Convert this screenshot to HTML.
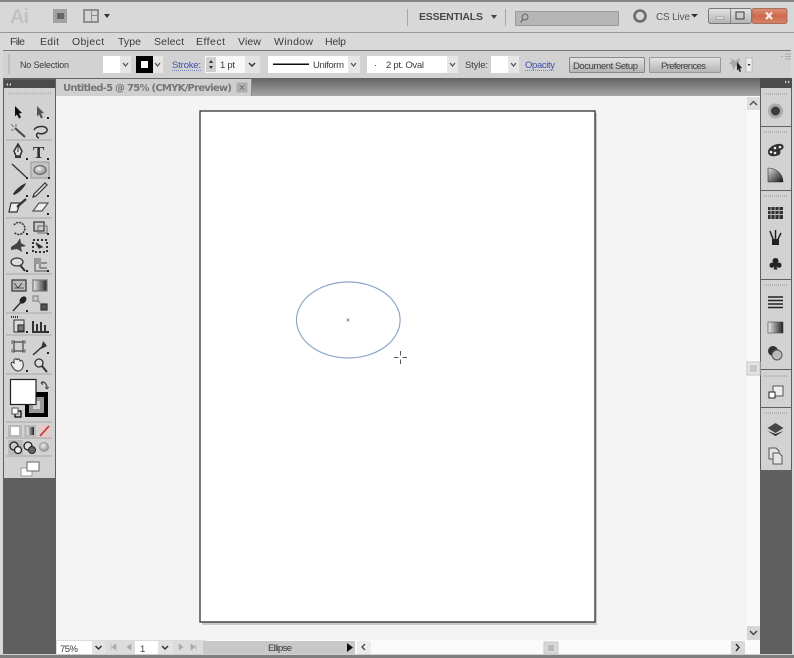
<!DOCTYPE html>
<html><head><meta charset="utf-8"><style>
html,body{margin:0;padding:0;width:794px;height:658px;overflow:hidden;background:#d6d6d6}
svg{display:block}
text{font-family:"Liberation Sans",sans-serif;fill:#3a3a3a}
</style></head><body>
<svg width="794" height="658" viewBox="0 0 794 658" xmlns="http://www.w3.org/2000/svg">
<defs>
<filter id="all" filterUnits="userSpaceOnUse" x="-8" y="-8" width="810" height="674"><feGaussianBlur stdDeviation="0.38"/></filter>
<filter id="b" x="-5%" y="-5%" width="110%" height="110%"><feGaussianBlur stdDeviation="0.35"/></filter>
<linearGradient id="tab" x1="0" y1="0" x2="0" y2="1"><stop offset="0" stop-color="#626262"/><stop offset="1" stop-color="#a6a6a6"/></linearGradient>
<linearGradient id="cl" x1="0" y1="0" x2="0" y2="1"><stop offset="0" stop-color="#dc9078"/><stop offset=".5" stop-color="#cf6a4a"/><stop offset="1" stop-color="#d48468"/></linearGradient>
<linearGradient id="gb" x1="0" y1="0" x2="0" y2="1"><stop offset="0" stop-color="#e4e4e4"/><stop offset="1" stop-color="#b4b4b4"/></linearGradient>
<linearGradient id="grad" x1="0" y1="0" x2="1" y2="0"><stop offset="0" stop-color="#eee"/><stop offset="1" stop-color="#222"/></linearGradient>
<linearGradient id="tri" x1="0" y1="0" x2="1" y2="1"><stop offset="0" stop-color="#ddd"/><stop offset="1" stop-color="#111"/></linearGradient>
<radialGradient id="ball" cx=".4" cy=".35" r=".7"><stop offset="0" stop-color="#eee"/><stop offset="1" stop-color="#888"/></radialGradient>
</defs>
<g filter="url(#all)">

<!-- base -->
<rect x="-8" y="-8" width="810" height="674" fill="#d8d8d8"/>
<rect x="-8" y="-8" width="810" height="10" fill="#858585"/>
<rect y="32" width="794" height="1" fill="#9a9a9a"/>
<rect y="33" width="794" height="17" fill="#d9d9d9"/>
<rect x="3" y="50" width="788" height="1" fill="#777"/>
<rect x="3" y="51" width="788" height="27" fill="#d2d2d2"/>

<!-- dark side areas -->
<rect x="3" y="78" width="53" height="577" fill="#5e5e5e"/>
<rect x="760" y="78" width="32" height="577" fill="#5e5e5e"/>

<!-- tab bar -->
<rect x="56" y="78" width="704" height="18" fill="url(#tab)"/>
<rect x="56" y="79" width="195" height="17" fill="#cfcfcf"/>
<rect x="251" y="79" width="1" height="17" fill="#8a8a8a"/>

<!-- canvas -->
<rect x="56" y="96" width="704" height="559" fill="#f4f4f4"/>
<rect x="747" y="96" width="13" height="544" fill="#f9f9f9"/>
<rect x="203" y="640" width="557" height="14" fill="#fafafa"/>
<rect x="56" y="640" width="150" height="14" fill="#dcdcdc"/>

<!-- artboard -->
<rect x="202" y="113" width="395" height="512" fill="#c9c9c9" filter="url(#b)"/>
<rect x="200" y="111" width="395" height="511" fill="#fff" stroke="#222" stroke-width="1.200"/>

<!-- ellipse -->
<ellipse cx="348.300" cy="320" rx="51.800" ry="38" fill="#fff" stroke="#8ea6c8" stroke-width="1.200"/>
<path d="M346.500 318.500l3 3M349.500 318.500l-3 3" stroke="#777" stroke-width=".7"/>
<path d="M400.500 351v4.500M400.500 359.500v4.500M394 357.500h4.500M402.500 357.500h4.500" stroke="#555" stroke-width="1"/>

<!-- bottom frame -->
<rect y="654" width="794" height="1" fill="#cfcfcf"/>
<rect x="-8" y="655" width="810" height="11" fill="#7f7f7f"/>

<!-- title bar -->
<g>
<text x="10" y="23" font-size="20" font-weight="bold" style="fill:#c2c2c2" textLength="19">Ai</text>
<rect x="53" y="9" width="14" height="14" fill="#a2a2a2"/><rect x="57" y="13" width="7" height="6" fill="#666"/>
<rect x="83" y="9" width="16" height="14" fill="#8e8e8e"/>
<rect x="85" y="11" width="6" height="10" fill="#d6d6d6"/><rect x="92" y="11" width="5" height="4" fill="#d6d6d6"/><rect x="92" y="16" width="5" height="5" fill="#d6d6d6"/>
<path d="M104 14h6l-3 4z" fill="#333"/>
<rect x="407" y="9" width="1" height="17" fill="#a8a8a8"/>
<text x="419" y="20" font-size="10.500" font-weight="bold" style="fill:#4a4a4a" textLength="64">ESSENTIALS</text>
<path d="M491 15h6l-3 4z" fill="#444"/>
<rect x="505" y="9" width="1" height="17" fill="#a8a8a8"/>
<rect x="515.500" y="11.500" width="103" height="14" rx="1" fill="#b6b6b6" stroke="#999"/>
<circle cx="525" cy="17" r="3" fill="none" stroke="#666" stroke-width="1"/><path d="M523 19.500l-2.500 3" stroke="#666" stroke-width="1.200"/>
<circle cx="640" cy="16" r="5.500" fill="none" stroke="#6b6b6b" stroke-width="2.600"/>
<text x="656" y="20" font-size="10" style="fill:#555" textLength="34">CS Live</text>
<path d="M691 14h7l-3.500 3.500z" fill="#333"/>
<rect x="708.500" y="8.500" width="43" height="15" rx="2" fill="url(#gb)" stroke="#777"/>
<rect x="752" y="8.500" width="35" height="15" rx="2" fill="url(#cl)" stroke="#a8705c"/>
<rect x="730" y="9" width="1" height="14" fill="#888"/>
<rect x="716" y="17" width="8" height="2" fill="#fff" stroke="#666" stroke-width=".5"/>
<rect x="736" y="12" width="8" height="7" fill="none" stroke="#555" stroke-width="1.200"/><rect x="738" y="14" width="4" height="3" fill="#ccc"/>
<path d="M766 12.500l6 6.500M772 12.500l-6 6.500" stroke="#f3ece8" stroke-width="2.200"/>
</g>

<!-- menu -->
<g font-size="10.500">
<text x="10" y="45" textLength="15">File</text>
<text x="40" y="45" textLength="19">Edit</text>
<text x="72" y="45" textLength="32">Object</text>
<text x="118" y="45" textLength="23">Type</text>
<text x="154" y="45" textLength="30">Select</text>
<text x="196" y="45" textLength="29">Effect</text>
<text x="238" y="45" textLength="23">View</text>
<text x="274" y="45" textLength="39">Window</text>
<text x="325" y="45" textLength="21">Help</text>
</g>

<!-- control bar -->
<g>
<rect x="8" y="54" width="2" height="20" fill="#bdbdbd"/>
<text x="20" y="68" font-size="9" textLength="49">No Selection</text>
<rect x="103" y="56" width="17" height="17" fill="#fff"/>
<rect x="120" y="56" width="11" height="17" fill="#e6e6e6"/><path d="M123 63l2.500 3 2.500-3" fill="none" stroke="#555" stroke-width="1.300"/>
<rect x="136" y="56" width="17" height="17" fill="#000"/><rect x="141" y="61" width="7" height="7" fill="#fff"/>
<rect x="153" y="56" width="10" height="17" fill="#e6e6e6"/><path d="M155 63l2.500 3 2.500-3" fill="none" stroke="#555" stroke-width="1.300"/>
<text x="172" y="68" font-size="9.500" style="fill:#3f4fb0" textLength="29">Stroke:</text>
<path d="M172 70.500h29" stroke="#5a66b8" stroke-width=".7" stroke-dasharray="1 1"/>
<rect x="205" y="56" width="40" height="17" fill="#f7f7f7"/>
<rect x="206" y="57" width="10" height="15" fill="#cfcfcf"/>
<path d="M209 63l2-3 2 3zM209 66l2 3 2-3z" fill="#333"/>
<text x="220" y="68" font-size="9.500" textLength="15">1 pt</text>
<rect x="245" y="56" width="15" height="17" fill="#e2e2e2"/><path d="M249 63l3 3 3-3" fill="none" stroke="#333" stroke-width="1.500"/>
<rect x="268" y="56" width="80" height="17" fill="#fff"/>
<rect x="273" y="63.500" width="36" height="1.500" fill="#111"/>
<text x="313" y="68" font-size="9.500" textLength="31">Uniform</text>
<rect x="348" y="56" width="12" height="17" fill="#e6e6e6"/><path d="M351 63l2.500 3 2.500-3" fill="none" stroke="#555" stroke-width="1.300"/>
<rect x="367" y="56" width="80" height="17" fill="#fff"/>
<text x="374" y="68" font-size="9.500">·</text>
<text x="386" y="68" font-size="9.500" textLength="38">2 pt. Oval</text>
<rect x="447" y="56" width="11" height="17" fill="#e6e6e6"/><path d="M450 63l2.500 3 2.500-3" fill="none" stroke="#555" stroke-width="1.300"/>
<text x="465" y="68" font-size="9.500" textLength="23">Style:</text>
<rect x="491" y="56" width="17" height="17" fill="#fff"/>
<rect x="508" y="56" width="11" height="17" fill="#e6e6e6"/><path d="M511 63l2.500 3 2.500-3" fill="none" stroke="#555" stroke-width="1.300"/>
<text x="525" y="68" font-size="9.500" style="fill:#3f4fb0" textLength="30">Opacity</text>
<path d="M525 70.500h30" stroke="#5a66b8" stroke-width=".7" stroke-dasharray="1 1"/>
<rect x="569.500" y="57.500" width="75" height="15" rx="1" fill="url(#gb)" stroke="#888"/>
<text x="573" y="69" font-size="9.500" textLength="65">Document Setup</text>
<rect x="649.500" y="57.500" width="71" height="15" rx="1" fill="url(#gb)" stroke="#999"/>
<text x="661" y="69" font-size="9.500" textLength="45">Preferences</text>
<path d="M730 58l5 3 5-3-1 6 2 3-5-1-3 4-1-5-3-2 3-2z" fill="#aaa"/>
<path d="M737 62l5 6-2 .5 1 3-1.500.5-1-3-1.500 1.500z" fill="#222"/>
<rect x="746" y="58" width="6" height="14" fill="#eee" stroke="#999" stroke-width=".5"/><path d="M747.500 64h3l-1.500 2z" fill="#222"/>
<path d="M781 56.500h2M785 54h6M785 56.500h6M785 59h6" stroke="#aaa" stroke-width="1"/>
</g>

<!-- tab text -->
<g>
<text x="63" y="91" font-size="10" font-weight="bold" style="font-family:'DejaVu Sans',sans-serif;fill:#757575" textLength="169">Untitled-5 @ 75% (CMYK/Preview)</text>
<rect x="237" y="83" width="10" height="9" fill="#b4b4b4" stroke="#9a9a9a" stroke-width=".6"/>
<path d="M239.500 85l5 5M244.500 85l-5 5" stroke="#777" stroke-width="1"/>
</g>

<!-- scrollbars -->
<g>
<rect x="747" y="97" width="13" height="13" fill="#dedede"/><path d="M750 105l3.500-3.500 3.500 3.500" fill="none" stroke="#555" stroke-width="1.500"/>
<rect x="747" y="362" width="13" height="13" fill="#e4e4e4" stroke="#c4c4c4"/><rect x="750" y="365" width="7" height="7" fill="#c8c8c8"/>
<rect x="747" y="626" width="13" height="14" fill="#d6d6d6"/><path d="M750 631l3.500 3.500 3.500-3.500" fill="none" stroke="#444" stroke-width="1.500"/>
<rect x="57" y="641" width="35" height="13" fill="#fff"/>
<text x="60" y="652" font-size="9.500" textLength="18">75%</text>
<rect x="92" y="641" width="14" height="13" fill="#e2e2e2"/><path d="M95.500 646l3 3 3-3" fill="none" stroke="#333" stroke-width="1.500"/>
<path d="M111 644v6M116 644l-4 3 4 3zM131 644l-4 3 4 3z" fill="#aaa" stroke="#aaa" stroke-width=".6"/>
<rect x="135" y="641" width="23" height="13" fill="#fff"/>
<text x="140" y="652" font-size="9.500">1</text>
<rect x="158" y="641" width="15" height="13" fill="#e2e2e2"/><path d="M162 646l3 3 3-3" fill="none" stroke="#333" stroke-width="1.500"/>
<path d="M179 644l4 3-4 3zM191 644l4 3-4 3zM196 644v6" fill="#aaa" stroke="#aaa" stroke-width=".6"/>
<rect x="203" y="641" width="152" height="13" fill="#c8c8c8"/>
<text x="268" y="651" font-size="9.500" textLength="24">Ellipse</text>
<path d="M347 643l6 4.500-6 4.500z" fill="#111"/>
<rect x="357" y="641" width="14" height="13" fill="#ececec"/><path d="M365 644l-3 3 3 3" fill="none" stroke="#444" stroke-width="1.300"/>
<rect x="544" y="642" width="14" height="12" fill="#d8d8d8" stroke="#c8c8c8"/><rect x="548" y="645" width="6" height="6" fill="#bbb"/>
<rect x="731" y="641" width="14" height="13" fill="#d8d8d8"/><path d="M736 644l3 3.500-3 3.500" fill="none" stroke="#333" stroke-width="1.500"/>
</g>

<!-- left toolbox -->
<rect x="4" y="88" width="51" height="390" fill="#d2d2d2"/>
<rect x="4" y="80" width="51" height="8" fill="#4c4c4c"/>
<path d="M8 83l-2 1.500 2 1.500zM11 83l-2 1.500 2 1.500z" fill="#ccc"/>
<path d="M8 93.500h44" stroke="#b4b4b4" stroke-dasharray="1 1" stroke-width="2"/>
<path d="M6 140h46M6 218h46M6 274h46M6 313h46M6 335h46M6 374h46M6 422h46M6 438h46M6 456h46" stroke="#a8a8a8" stroke-width="1"/>
<g fill="none" stroke="#333" stroke-width="1.200">
<rect x="31" y="162" width="18" height="16" fill="#c4c4c4" stroke="#a0a0a0"/>
<path d="M15 106l7 7-3 .5 2 4-2 1-2-4-2 2z" fill="#111" stroke="none"/>
<path d="M37 106l7 7-3 .5 2 4-2 1-2-4-2 2z" fill="#555" stroke="none"/>
<path d="M15 128l10 9" stroke="#444" stroke-width="2"/><path d="M11 124l3 3M16 124v3M11 130h3" stroke="#888"/>
<path d="M34 130c2-4 11-5 13-1 1 4-6 6-9 4-2 1-2 4 1 5" stroke-width="1.500"/>
<path d="M18 144l4 7-2 5h-4l-2-5z" fill="#ddd" stroke-width="1.500"/><path d="M18 144v8" stroke-width="1"/><path d="M15 157h6" stroke-width="2"/>
<text x="33" y="158" font-size="17" font-weight="bold" style="font-family:'Liberation Serif',serif;fill:#333" stroke="none">T</text>
<path d="M12 164l14 13" stroke-width="1.300"/>
<ellipse cx="40" cy="170" rx="6" ry="4.500" fill="url(#ball)" stroke="#666"/>
<path d="M13 194c2-4 8-9 13-11-1 4-7 10-12 12z" fill="#333" stroke="none"/>
<path d="M34 194l11-11 2 2-11 11-3 1z" fill="#ddd"/>
<path d="M11 203h9l-3 9h-8z" fill="#eee"/><path d="M17 207l9-8" stroke-width="2.200"/>
<path d="M33 211l6-8h9l-6 8z" fill="#eee" stroke="#555"/>
<path d="M14 225a6 6 0 1 1 0 7" stroke-dasharray="2 1" stroke-width="1.500"/>
<rect x="34" y="222" width="10" height="9" fill="#ccc"/><rect x="38" y="226" width="9" height="7" stroke="#777"/>
<path d="M11 247l6-4 3-5 1 5 5 3-5 1 1 5-5-3-6 1z" fill="#444" stroke="none"/>
<path d="M33 240h14v12h-14z" stroke-dasharray="2 2" stroke-width="2"/><path d="M36 243l6 4-3 1z" fill="#222"/>
<ellipse cx="17" cy="262" rx="6" ry="4" fill="#ddd"/><path d="M20 265l5 6" stroke-width="2"/>
<path d="M35 258v13h12M40 258v10h7M35 263h12" stroke="#666"/><rect x="35" y="258" width="6" height="6" fill="#999" stroke="none"/>
<rect x="12" y="280" width="14" height="11" fill="#bbb"/><path d="M14 283l4 5 4-5M14 288h10" stroke-width=".8"/>
<rect x="33" y="280" width="14" height="11" fill="url(#grad)" stroke="#777"/>
<path d="M13 311l9-10" stroke-width="1.500"/><ellipse cx="23" cy="300" rx="3" ry="4" fill="#222" stroke="none" transform="rotate(40 23 300)"/>
<rect x="33" y="296" width="5" height="5" fill="#ccc" stroke="#888"/><rect x="41" y="304" width="6" height="6" fill="#555" stroke="#333"/><path d="M38 301l3 3" stroke="#888"/>
<rect x="14" y="320" width="10" height="12" fill="#ddd" stroke-width="1"/><rect x="18" y="325" width="6" height="6" fill="#777"/><path d="M11 317h7" stroke-dasharray="1 1" stroke-width="2"/>
<path d="M33 331v-10M37 331v-7M41 331v-9M45 331v-6M32 332h16" stroke-width="2"/>
<rect x="14" y="342" width="9" height="9" stroke="#444"/><path d="M12 344v-3h3M25 344v-3h-3M12 349v3h3M25 349v3h-3" stroke="#444" stroke-width=".8"/>
<path d="M33 355l10-9" stroke-width="1.500"/><path d="M43 341l4 5-6 3z" fill="#333" stroke="none"/>
<path d="M12 366c-2-3 0-5 2-3v-3c1-2 3-1 3 0 1-2 3-1 3 1 2-1 3 0 3 2 1 5-2 8-5 8s-4-2-6-5z" fill="#eee" stroke-width="1"/>
<circle cx="39" cy="363" r="4" fill="#ddd" stroke-width="1.300"/><path d="M42 366l5 6" stroke-width="2"/>
</g>
<g fill="#222">
<rect x="47" y="117" width="2" height="2"/><rect x="26" y="158" width="2" height="2"/><rect x="47" y="158" width="2" height="2"/><rect x="26" y="177" width="2" height="2"/><rect x="48" y="177" width="2" height="2"/><rect x="26" y="195" width="2" height="2"/><rect x="47" y="195" width="2" height="2"/><rect x="47" y="213" width="2" height="2"/><rect x="26" y="233" width="2" height="2"/><rect x="47" y="233" width="2" height="2"/><rect x="26" y="252" width="2" height="2"/><rect x="26" y="270" width="2" height="2"/><rect x="47" y="270" width="2" height="2"/><rect x="26" y="310" width="2" height="2"/><rect x="26" y="331" width="2" height="2"/><rect x="47" y="331" width="2" height="2"/><rect x="47" y="352" width="2" height="2"/><rect x="26" y="370" width="2" height="2"/>
</g>

<!-- fill / stroke -->
<g>
<rect x="25" y="392" width="23" height="25" fill="#000"/>
<rect x="29" y="397" width="15" height="16" fill="#999"/>
<rect x="33" y="401" width="7" height="8" fill="#d2d2d2"/>
<rect x="10.500" y="379.500" width="25.500" height="25" fill="#fff" stroke="#222" stroke-width="1.200"/>
<path d="M41 383c3-2 5 0 6 4M41 383l2-1.500M41 383l2 1.500M47 389l-1.500-2M47 389l1.500-2" fill="none" stroke="#444" stroke-width="1.300"/>
<rect x="15" y="411" width="6" height="6" fill="none" stroke="#111" stroke-width="1.300"/>
<rect x="12" y="408" width="6" height="6" fill="#fff" stroke="#555"/>
<rect x="8" y="425" width="14" height="12" fill="#b8b8b8"/><rect x="11" y="427" width="8" height="8" fill="#fff"/>
<rect x="24" y="425" width="12" height="12" fill="#bbb"/><rect x="27" y="427" width="7" height="8" fill="url(#grad)"/>
<rect x="39" y="425" width="11" height="12" fill="#e8c8c8"/><path d="M40 436l9-10" stroke="#c03030" stroke-width="1.600"/>
<rect x="8" y="440" width="15" height="15" fill="#bbb"/>
<circle cx="14" cy="446" r="4" fill="#ccc" stroke="#222" stroke-width="1.300"/><circle cx="18" cy="450" r="3.500" fill="#eee" stroke="#222" stroke-width="1.300"/>
<circle cx="28" cy="446" r="4" fill="#ddd" stroke="#222" stroke-width="1.300"/><circle cx="32" cy="450" r="3.500" fill="#666" stroke="#222"/>
<circle cx="44" cy="447" r="4.500" fill="url(#ball)" stroke="#999"/>
<rect x="21" y="468" width="11" height="8" fill="#fff" stroke="#999"/>
<rect x="27" y="462" width="12" height="9" fill="#fff" stroke="#666"/>
</g>

<!-- right dock -->
<rect x="760" y="78" width="32" height="10" fill="#4c4c4c"/>
<path d="M785 80.500l2 1.500-2 1.500zM788 80.500l2 1.500-2 1.500z" fill="#ccc"/>
<rect x="761" y="88" width="30" height="38" fill="#d2d2d2"/>
<rect x="761" y="127" width="30" height="63" fill="#d2d2d2"/>
<rect x="761" y="191" width="30" height="88" fill="#d2d2d2"/>
<rect x="761" y="280" width="30" height="89" fill="#d2d2d2"/>
<rect x="761" y="370" width="30" height="37" fill="#d2d2d2"/>
<rect x="761" y="408" width="30" height="62" fill="#d2d2d2"/>
<path d="M764 94h24M764 132h24M764 196h24M764 285h24M764 376h24M764 413h24" stroke="#b2b2b2" stroke-width="2" stroke-dasharray="1 1"/>
<g>
<circle cx="775.500" cy="111" r="7.500" fill="#aaa"/><circle cx="775.500" cy="111" r="4.500" fill="#3a3a3a"/>
<path d="M768 152c0-5 8-9 13-8 4 1 3 5 0 6-2 1 1 3-2 5-4 2-11 2-11-3z" fill="#333"/>
<circle cx="771" cy="152" r="1.300" fill="#eee"/><circle cx="775" cy="148" r="1.300" fill="#eee"/><circle cx="780" cy="147" r="1.300" fill="#eee"/><circle cx="775" cy="153" r="1.300" fill="#eee"/>
<path d="M768 168c8 0 15 6 15 14h-15z" fill="url(#tri)" stroke="#333" stroke-width=".6"/>
<rect x="768" y="207" width="15" height="12" fill="#333"/>
<path d="M771 207v12M775 207v12M779 207v12M768 210.500h15M768 214.500h15" stroke="#bbb" stroke-width=".9"/>
<rect x="772" y="239" width="7" height="6" fill="#222"/><path d="M773 239l-3-8M775.500 239v-9M778 239l3-6" stroke="#222" stroke-width="1.500"/>
<path d="M775.500 258c2 0 3 1.500 3 3 0 1-.5 1.500-1 2 2-1 4 0 4 2.500s-3 3-5 1l1 3h-4l1-3c-2 2-5 1.500-5-1s2-3.500 4-2.500c-.5-.5-1-1-1-2 0-1.500 1-3 3-3z" fill="#222"/>
<path d="M768 297h15M768 300.500h15M768 304h15M768 307.500h15" stroke="#222" stroke-width="1.500"/>
<rect x="768" y="322" width="15" height="11" fill="url(#grad)" stroke="#444" stroke-width=".6"/>
<circle cx="773" cy="351" r="5" fill="#333"/><circle cx="777" cy="355" r="5" fill="#bbb" stroke="#555"/>
<rect x="773" y="386" width="10" height="10" fill="#eee" stroke="#555"/><rect x="769" y="392" width="6" height="6" fill="#fff" stroke="#222"/>
<path d="M775.500 423l8 5-8 5-8-5z" fill="#444"/><path d="M767.500 431l8 5 8-5-8 3z" fill="#222"/>
<path d="M769 448h7l3 3v8h-10z" fill="#e4e4e4" stroke="#555"/><path d="M773 453h6l3 3v8h-9z" fill="#e4e4e4" stroke="#555"/>
</g>
</g>
</svg>
</body></html>
